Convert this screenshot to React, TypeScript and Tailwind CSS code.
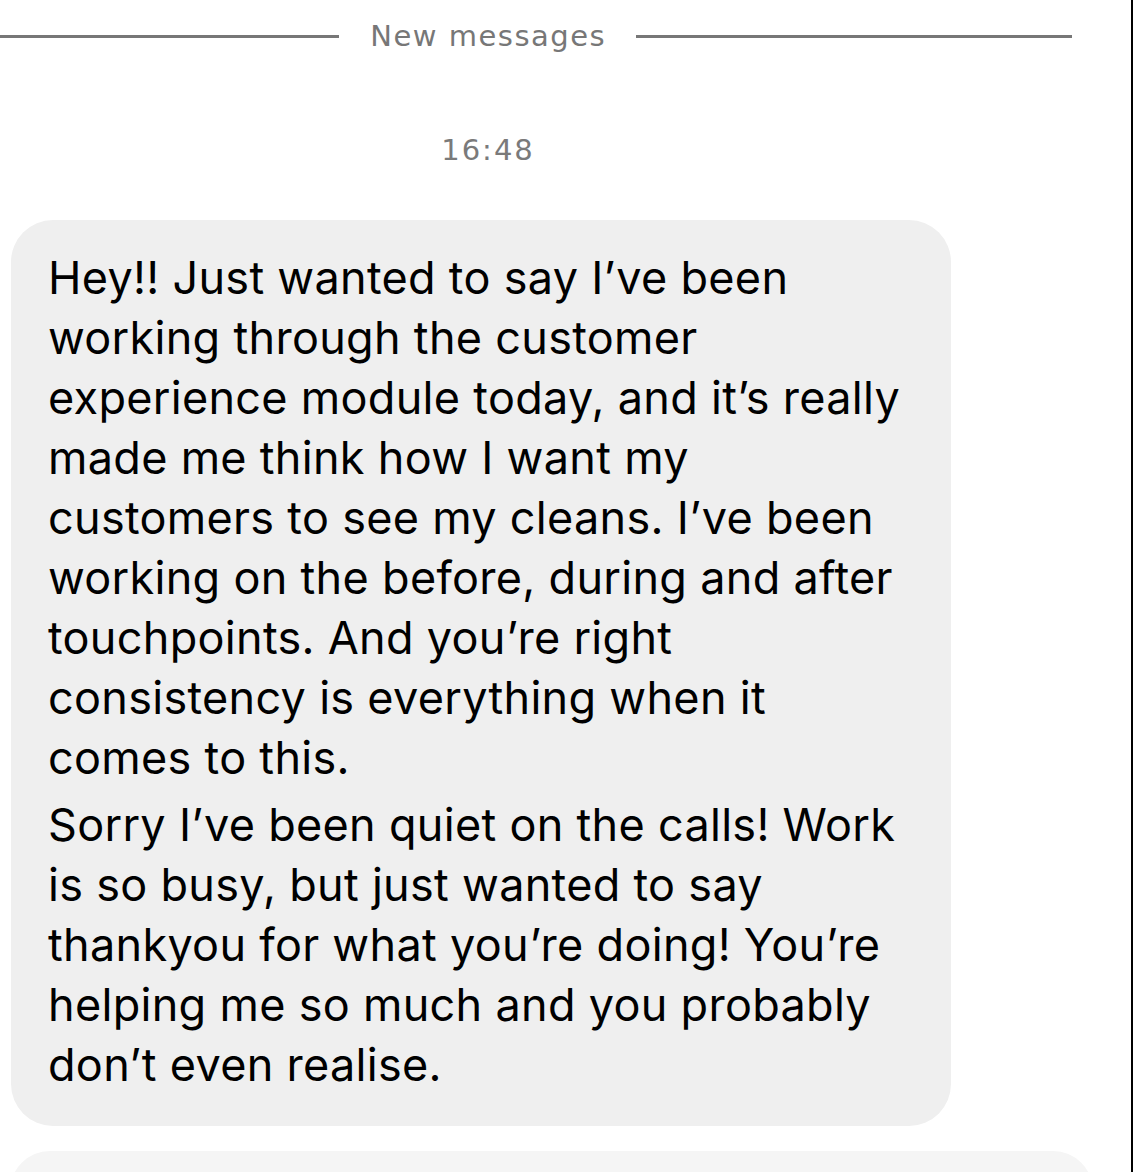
import React from "react";

const firstPara = [
  "Hey!! Just wanted to say I’ve been",
  "working through the customer",
  "experience module today, and it’s really",
  "made me think how I want my",
  "customers to see my cleans. I’ve been",
  "working on the before, during and after",
  "touchpoints. And you’re right",
  "consistency is everything when it",
  "comes to this.",
];

const secondPara = [
  "Sorry I’ve been quiet on the calls! Work",
  "is so busy, but just wanted to say",
  "thankyou for what you’re doing! You’re",
  "helping me so much and you probably",
  "don’t even realise.",
];

const App = () => {
  return (
    <div
      className="h-[1172px] w-[1133px] overflow-hidden border-r-2 border-black bg-white"
      style={{ fontFamily: "Inter, 'Noto Sans', sans-serif" }}
    >
      <div className="flex h-[72px] items-center">
        <div className="h-[3px] w-[339px] bg-[#777777]" />
        <span
          className="w-[297px] pl-[1.5px] text-center text-[29px] leading-none tracking-[1.5px] text-[#777777]"
          style={{ fontFamily: "'DejaVu Sans', sans-serif" }}
        >
          New messages
        </span>
        <div className="h-[3px] w-[436px] bg-[#777777]" />
      </div>

      <div className="flex w-[976px] justify-center pt-[64px]">
        <span
          className="text-[29px] leading-none tracking-[2px] text-[#7a7a7a]"
          style={{ fontFamily: "'DejaVu Sans', sans-serif" }}
        >
          16:48
        </span>
      </div>

      <div className="ml-[11px] mt-[55px] w-[940px] rounded-[42px] bg-[#efefef] pb-[31px] pl-[37px] pt-[28px] text-[45px] leading-[60px] tracking-[0.3px] text-black">
        <div>
          {firstPara.map((line) => (
            <div key={line} className="whitespace-nowrap">
              {line}
            </div>
          ))}
        </div>
        <div className="mt-[7px]">
          {secondPara.map((line) => (
            <div key={line} className="whitespace-nowrap">
              {line}
            </div>
          ))}
        </div>
      </div>

      <div className="ml-[10px] mt-[25px] h-[80px] w-[1083px] rounded-[42px] bg-[#f5f5f5]" />
    </div>
  );
};

export default App;
